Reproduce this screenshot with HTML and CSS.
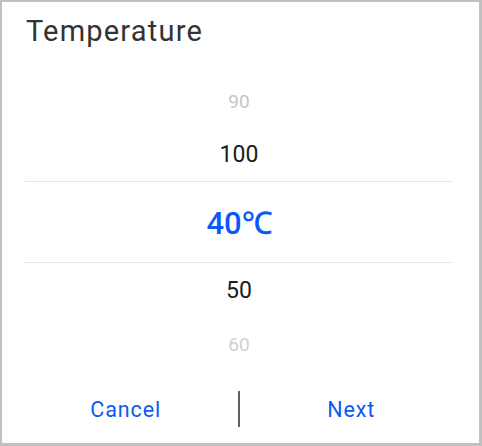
FILE: index.html
```html
<!DOCTYPE html>
<html>
<head>
<meta charset="utf-8">
<link rel="stylesheet" href="styles.css">
</head>
<body>
<div class="dialog">
  <div class="title">Temperature</div>
  <div class="picker">
    <div class="row far">90</div>
    <div class="row near near-top">100</div>
    <div class="row selected">40℃</div>
    <div class="row near">50</div>
    <div class="row far far-bottom">60</div>
  </div>
  <div class="footer">
    <div class="btn btn-left">Cancel</div>
    <div class="sep"></div>
    <div class="btn btn-right">Next</div>
  </div>
</div>
</body>
</html>
```
FILE: styles.css
```css
html, body {
  margin: 0;
  padding: 0;
  background: #ffffff;
}
.dialog {
  box-sizing: border-box;
  width: 482px;
  height: 446px;
  border-style: solid;
  border-color: #c0c0c0;
  border-width: 2px 3px 3px 2px;
  background: #ffffff;
  font-family: Roboto, "Noto Sans", sans-serif;
  display: flex;
  flex-direction: column;
}
.title {
  padding: 9px 0 0 24px;
  height: 40px;
  line-height: 40px;
  font-size: 29px;
  color: #333333;
  letter-spacing: 1.2px;
}
.picker {
  margin: 23px 26px 0 23px;
  display: flex;
  flex-direction: column;
}
.row {
  display: flex;
  align-items: center;
  justify-content: center;
  height: 54px;
}
.near-top {
  height: 53px;
}
.far {
  font-size: 19px;
  color: #c6c6c6;
}
.far-bottom {
  color: #cfcfcf;
}
.near {
  font-size: 23px;
  color: #1c1c1c;
}
.selected {
  box-sizing: border-box;
  height: 82px;
  border-top: 1px solid #e6e6e6;
  border-bottom: 1px solid #e6e6e6;
  font-size: 31px;
  font-weight: 500;
  color: #0a59f7;
  padding-left: 1px;
}
.footer {
  display: flex;
  align-items: center;
  height: 68px;
  padding: 4px 0 0 0;
}
.btn {
  flex: 1;
  text-align: center;
  font-size: 21.5px;
  color: #0a59f7;
  letter-spacing: 0.9px;
}
.btn-left {
  padding-left: 12px;
}
.btn-right {
  padding-right: 16px;
}
.sep {
  width: 2px;
  height: 36px;
  background: #5f5f5f;
}
```
